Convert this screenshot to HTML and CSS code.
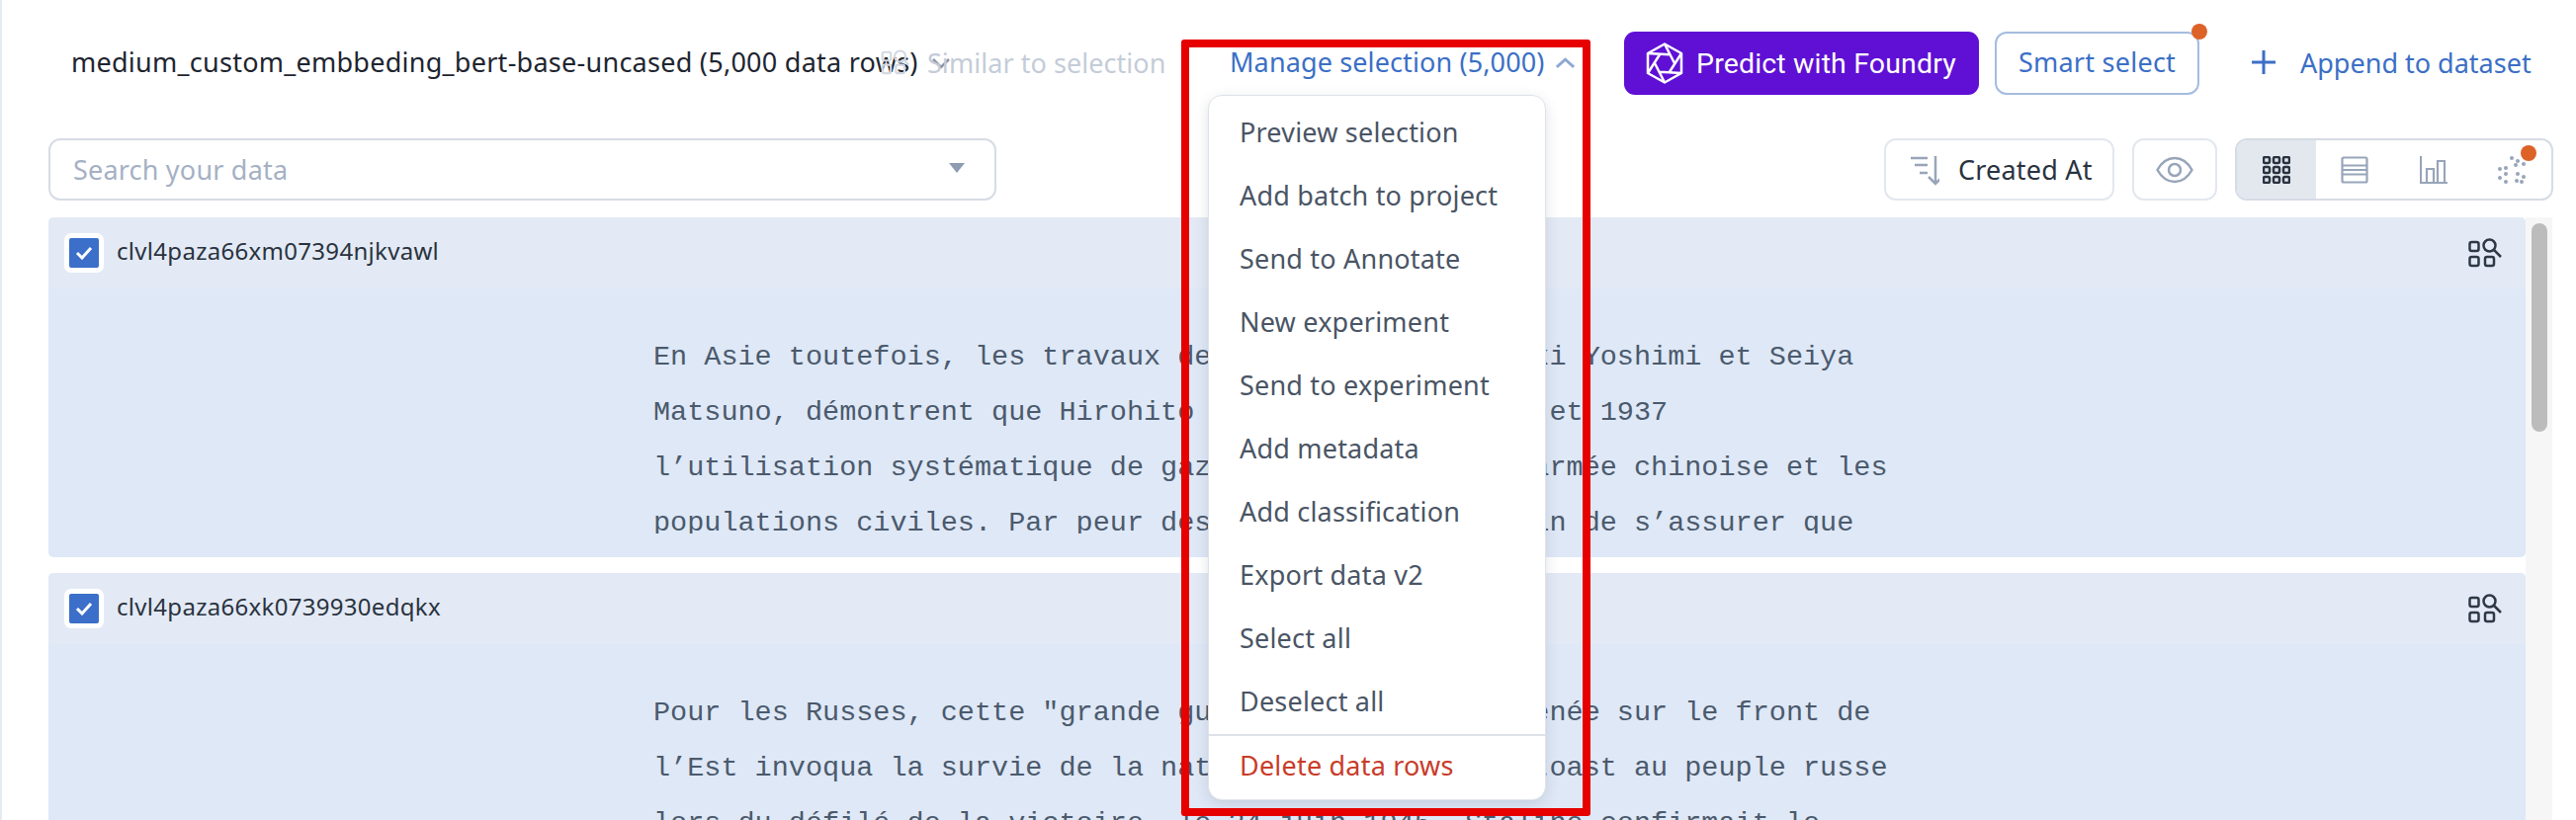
FILE: index.html
```html
<!DOCTYPE html>
<html lang="en">
<head>
<meta charset="utf-8">
<title>Catalog</title>
<link rel="stylesheet" href="styles.css">
</head>
<body>
<div class="app">
  <header class="topbar">
    <div class="title">
      <span class="title-text">medium_custom_embbeding_bert-base-uncased (5,000 data rows)</span>
      <svg class="title-chevron" viewBox="0 0 20 12"><path d="M2 2l8 8 8-8"/></svg>
    </div>
    <div class="similar">
      <svg class="icon-similar" viewBox="0 0 34 30"><rect x="2" y="3" width="10" height="10" rx="2"/><rect x="2" y="18" width="10" height="10" rx="2"/><rect x="18" y="18" width="10" height="10" rx="2"/><circle cx="23" cy="8" r="6.5"/><path d="M28 13l5 5"/></svg>
      <span>Similar to selection</span>
    </div>
    <div class="manage">
      <span class="manage-label">Manage selection (5,000)</span>
      <svg class="manage-chevron" viewBox="0 0 22 12"><path d="M2 10l9-8 9 8"/></svg>
      <ul class="menu">
        <li class="menu-item">Preview selection</li>
        <li class="menu-item">Add batch to project</li>
        <li class="menu-item">Send to Annotate</li>
        <li class="menu-item">New experiment</li>
        <li class="menu-item">Send to experiment</li>
        <li class="menu-item">Add metadata</li>
        <li class="menu-item">Add classification</li>
        <li class="menu-item">Export data v2</li>
        <li class="menu-item">Select all</li>
        <li class="menu-item">Deselect all</li>
        <li class="menu-item menu-danger">Delete data rows</li>
      </ul>
    </div>
    <button class="btn-foundry">
      <svg class="icon-foundry" viewBox="0 0 38 42"><path d="M19 1.500L36 11v20l-17 9.500L2 31V11z"/><path d="M19 1.500L29 21M36 11L24 29.700M36 31l-22-1.300M19 40.500L9 21M2 31l12-18.700M2 11l22 1.300"/></svg>
      <span>Predict with Foundry</span>
    </button>
    <button class="btn-smart">Smart select<span class="dot dot-smart"></span></button>
    <div class="append">
      <svg class="icon-plus" viewBox="0 0 24 24"><path d="M12 0v24M0 12h24"/></svg>
      <span>Append to dataset</span>
    </div>
  </header>

  <section class="toolbar">
    <div class="search">
      <span class="search-placeholder">Search your data</span>
      <span class="search-caret"></span>
    </div>
    <div class="tool-right">
      <div class="sort">
        <svg class="icon-sort" viewBox="0 0 30 32"><path class="gray" d="M1 4h17M5 11h13M10 19h8M26 2v28M19 23l7 7 7-7"/></svg>
        <span>Created At</span>
      </div>
      <div class="eye">
        <svg class="icon-eye" viewBox="0 0 38 28"><path class="gray" d="M1.500 14C6 6 12 2 19 2s13 4 17.500 12C32 22 26 26 19 26S6 22 1.500 14z"/><circle class="gray" cx="19" cy="14" r="6"/></svg>
      </div>
      <div class="views">
        <div class="view view-active">
          <svg class="icon-view dark" viewBox="0 0 28 28"><rect x="1" y="1" width="6" height="6" rx="1.500"/><rect x="11" y="1" width="6" height="6" rx="1.500"/><rect x="21" y="1" width="6" height="6" rx="1.500"/><rect x="1" y="11" width="6" height="6" rx="1.500"/><rect x="11" y="11" width="6" height="6" rx="1.500"/><rect x="21" y="11" width="6" height="6" rx="1.500"/><rect x="1" y="21" width="6" height="6" rx="1.500"/><rect x="11" y="21" width="6" height="6" rx="1.500"/><rect x="21" y="21" width="6" height="6" rx="1.500"/></svg>
        </div>
        <div class="view">
          <svg class="icon-view gray-stroke" viewBox="0 0 28 28"><rect x="1.500" y="1.500" width="25" height="25" rx="1.500"/><path d="M1.500 9.500h25M1.500 14h25M1.500 18.500h25"/></svg>
        </div>
        <div class="view">
          <svg class="icon-view gray-stroke" viewBox="0 0 28 28"><path d="M1 0v27h27M7 27V13h7v14M18 27V5h7v22"/></svg>
        </div>
        <div class="view">
          <svg class="icon-view gray-fill" viewBox="0 0 28 28"><circle cx="14" cy="2" r="2"/><circle cx="20" cy="5" r="2"/><circle cx="26" cy="8" r="2"/><circle cx="18" cy="9" r="2"/><circle cx="2" cy="13" r="2"/><circle cx="8" cy="12" r="2"/><circle cx="8" cy="18" r="2"/><circle cx="20" cy="18" r="2"/><circle cx="26" cy="21" r="2"/><circle cx="2" cy="22" r="2"/><circle cx="8" cy="26" r="2"/><circle cx="19" cy="25" r="2"/><circle cx="24" cy="26" r="2"/></svg>
          <span class="dot dot-scatter"></span>
        </div>
      </div>
    </div>
  </section>

  <section class="results">
    <div class="cards">
      <article class="card">
        <div class="card-head">
          <span class="check"><svg class="icon-check" viewBox="0 0 18 14"><path d="M2 7l5 5 9-10"/></svg></span>
          <span class="card-id">clvl4paza66xm07394njkvawl</span>
          <svg class="icon-find" viewBox="0 0 34 30"><rect x="1.500" y="4" width="9" height="9" rx="2"/><rect x="1.500" y="19" width="9" height="9" rx="2"/><rect x="17" y="19" width="9" height="9" rx="2"/><circle cx="21.500" cy="7.500" r="6"/><path d="M26 12l7 7"/></svg>
        </div>
        <div class="card-body">
          <p class="card-text">En Asie toutefois, les travaux des historiens Yoshiaki Yoshimi et Seiya<br>Matsuno, démontrent que Hirohito a autorisé, en 1931 et 1937<br>l’utilisation systématique de gaz toxiques contre l’armée chinoise et les<br>populations civiles. Par peur des représailles et afin de s’assurer que</p>
        </div>
      </article>
      <article class="card">
        <div class="card-head">
          <span class="check"><svg class="icon-check" viewBox="0 0 18 14"><path d="M2 7l5 5 9-10"/></svg></span>
          <span class="card-id">clvl4paza66xk0739930edqkx</span>
          <svg class="icon-find" viewBox="0 0 34 30"><rect x="1.500" y="4" width="9" height="9" rx="2"/><rect x="1.500" y="19" width="9" height="9" rx="2"/><rect x="17" y="19" width="9" height="9" rx="2"/><circle cx="21.500" cy="7.500" r="6"/><path d="M26 12l7 7"/></svg>
        </div>
        <div class="card-body">
          <p class="card-text">Pour les Russes, cette "grande guerre patriotique" menée sur le front de<br>l’Est invoqua la survie de la nation et son célèbre toast au peuple russe<br>lors du défilé de la victoire, le 24 juin 1945, Staline confirmait le</p>
        </div>
      </article>
    </div>
    <div class="scrollbar"><span class="scroll-thumb"></span></div>
  </section>

  <div class="highlight"></div>
</div>
</body>
</html>
```
FILE: styles.css
```css
* { box-sizing: border-box; }
html, body { margin: 0; padding: 0; height: 100%; overflow: hidden; background: #fff; }
body { font-family: "Noto Sans", Roboto, sans-serif; font-size: 27px; letter-spacing: .2px; color: #2a3340; }

.app {
  position: relative;
  height: 830px;
  border-left: 2px solid #e4ebf2;
  overflow: hidden;
}

/* top bar */
.topbar {
  display: flex;
  align-items: center;
  height: 64px;
  margin-top: 32px;
  padding-left: 70px;
}
.title {
  flex: none;
  width: 819px;
  display: flex;
  align-items: center;
  white-space: nowrap;
}
.title-text { flex: none; width: 859px; padding-bottom: 3px; letter-spacing: .26px; color: #1e2530; }
.title-chevron {
  flex: none;
  width: 20px;
  height: 12px;
  margin-left: 11px;
  fill: none;
  stroke: #8b95a5;
  stroke-width: 2.500;
}
.similar {
  flex: none;
  display: flex;
  align-items: center;
  gap: 18px;
  width: 288px;
  margin-right: 65px;
  padding-bottom: 2px;
  color: #c4ccd8;
  letter-spacing: .05px;
  white-space: nowrap;
  position: relative;
}
.icon-similar { width: 29px; height: 28px; fill: none; stroke: #d3d9e2; stroke-width: 2.500; flex: none; }
.manage {
  position: relative;
  flex: none;
  display: flex;
  align-items: center;
  height: 64px;
  width: 350px;
  margin-right: 49px;
  color: #3b6fc6;
  letter-spacing: .12px;
  white-space: nowrap;
}
.manage-label { flex: none; width: 329px; padding-bottom: 3px; }
.manage-chevron { flex: none; width: 21px; height: 12px; fill: none; stroke: #8ea8d4; stroke-width: 3; }

/* dropdown */
.menu {
  position: absolute;
  left: -22px;
  top: 100%;
  z-index: 5;
  width: 342px;
  height: 714px;
  margin: 0;
  padding: 6px 0 0;
  list-style: none;
  background: #fff;
  border: 1px solid #dfe3e9;
  border-radius: 14px;
  box-shadow: 0 4px 14px rgba(60, 75, 100, .16);
  overflow: hidden;
  letter-spacing: .2px;
}
.menu-item {
  display: flex;
  align-items: center;
  height: 64px;
  padding: 0 0 4px 31px;
  color: #4a5565;
}
.menu-danger {
  height: 66px;
  border-top: 2px solid #dde2e8;
  padding-bottom: 6px;
  color: #c93c2a;
}

/* buttons */
.btn-foundry {
  flex: none;
  display: flex;
  align-items: center;
  gap: 13px;
  width: 359px;
  height: 64px;
  margin-right: 16px;
  padding: 0 0 0 22px;
  border: 0;
  border-radius: 11px;
  background: #5f10d4;
  color: #fff;
  font: 28.500px Roboto, sans-serif;
  letter-spacing: .15px;
  white-space: nowrap;
}
.icon-foundry { flex: none; width: 38px; height: 42px; fill: none; stroke: #fff; stroke-width: 2.500; stroke-linejoin: round; }
.btn-smart {
  position: relative;
  flex: none;
  width: 207px;
  height: 64px;
  margin-right: 53px;
  padding: 0 0 3px;
  border: 2px solid #a5bce0;
  border-radius: 12px;
  background: #fff;
  color: #3b6fc6;
  font: inherit;
  letter-spacing: .25px;
  white-space: nowrap;
}
.dot {
  position: absolute;
  width: 16px;
  height: 16px;
  border-radius: 50%;
  background: #dd6227;
}
.dot-smart { right: -10px; top: -10px; }
.dot-scatter { right: 15px; top: 5px; }
.append {
  flex: none;
  display: flex;
  align-items: center;
  gap: 25px;
  padding-bottom: 2px;
  color: #3b6fc6;
  letter-spacing: 0;
  white-space: nowrap;
}
.icon-plus { flex: none; width: 24px; height: 24px; fill: none; stroke: #3b6fc6; stroke-width: 3; }

/* toolbar */
.toolbar {
  display: flex;
  align-items: stretch;
  height: 63px;
  margin-top: 44px;
  padding-left: 47px;
}
.search {
  flex: none;
  position: relative;
  display: flex;
  align-items: center;
  width: 959px;
  padding-left: 23px;
  border: 2px solid #d6dce4;
  border-radius: 12px;
}
.search-placeholder { color: #a5b1c4; }
.search-caret {
  position: absolute;
  right: 30px;
  top: 23px;
  border-left: 8px solid transparent;
  border-right: 8px solid transparent;
  border-top: 10px solid #8f9bb0;
}
.tool-right { display: flex; gap: 18px; margin-left: 898px; }
.sort {
  flex: none;
  display: flex;
  align-items: center;
  gap: 19px;
  width: 233px;
  padding-left: 24px;
  border: 2px solid #e3e7ee;
  border-radius: 12px;
  white-space: nowrap;
}
.icon-sort { flex: none; width: 30px; height: 32px; }
.gray { fill: none; stroke: #98a5b9; stroke-width: 2.500; }
.eye {
  flex: none;
  display: flex;
  align-items: center;
  justify-content: center;
  width: 86px;
  border: 2px solid #e3e7ee;
  border-radius: 12px;
}
.icon-eye { width: 38px; height: 28px; }
.views {
  flex: none;
  display: flex;
  width: 322px;
  border: 2px solid #d6dce4;
  border-radius: 12px;
}
.view {
  position: relative;
  flex: 1 1 0;
  display: flex;
  align-items: center;
  justify-content: center;
}
.view-active { background: #e3e8ef; border-radius: 10px 0 0 10px; }
.icon-view { width: 28px; height: 28px; }
.dark { fill: none; stroke: #2a3340; stroke-width: 2.500; }
.gray-stroke { fill: none; stroke: #98a5b9; stroke-width: 2.200; }
.gray-fill { fill: #98a5b9; }

/* results */
.results {
  display: flex;
  align-items: flex-start;
  height: 610px;
  margin-top: 17px;
  padding-left: 47px;
}
.cards {
  flex: none;
  width: 2506px;
  display: flex;
  flex-direction: column;
  gap: 16px;
}
.card {
  flex: none;
  height: 344px;
  border-radius: 5px;
  background: #dfe8f6;
  overflow: hidden;
}
.card-head {
  display: flex;
  align-items: center;
  height: 72px;
  padding: 0 24px 0 16px;
  background: #e3eaf5;
}
.check {
  flex: none;
  display: flex;
  align-items: center;
  justify-content: center;
  width: 40px;
  height: 40px;
  border: 5px solid #fff;
  border-radius: 7px;
  background: #3b6fc9;
}
.icon-check { width: 18px; height: 14px; fill: none; stroke: #fff; stroke-width: 3; }
.card-id { flex: 1 1 auto; margin-left: 13px; padding-bottom: 5px; font-size: 24px; letter-spacing: .3px; color: #2a3340; white-space: nowrap; }
.icon-find { flex: none; width: 34px; height: 30px; fill: none; stroke: #2f3946; stroke-width: 2.500; }
.card-body { padding: 42px 0 0 612px; }
.card-text {
  margin: 0;
  height: 206px;
  overflow: hidden;
  font: 28.500px/56px "Liberation Mono", "DejaVu Sans Mono", monospace;
  letter-spacing: 0;
  color: #4b5a6d;
  white-space: nowrap;
}
.scrollbar {
  flex: none;
  width: 27px;
  height: 610px;
  padding: 6px 5px 0 6px;
  background: #f6f6f6;
}
.scroll-thumb {
  display: block;
  width: 16px;
  height: 211px;
  border-radius: 8px;
  background: #bcbcbc;
}

/* annotation rectangle drawn on top of the screenshot */
.highlight {
  position: absolute;
  z-index: 10;
  left: 1193px;
  top: 40px;
  width: 414px;
  height: 786px;
  border: 8px solid #e60000;
  border-radius: 3px;
  pointer-events: none;
}
```
